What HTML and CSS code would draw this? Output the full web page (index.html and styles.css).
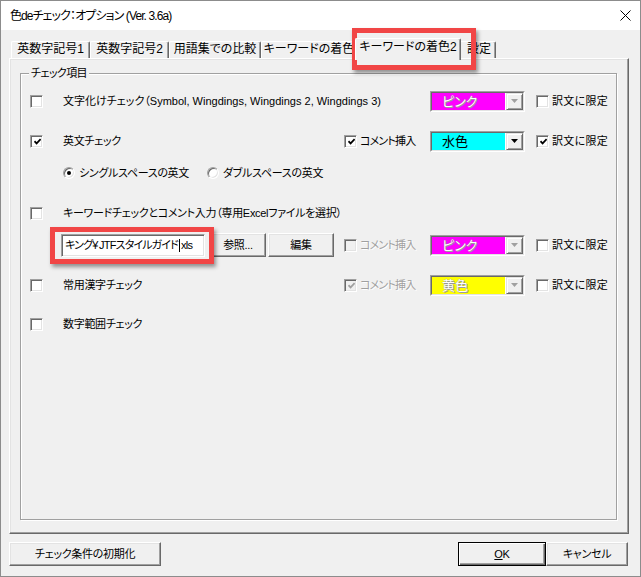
FILE: index.html
```html
<!DOCTYPE html>
<html lang="ja">
<head>
<meta charset="utf-8">
<title>色deチェック：オプション</title>
<link rel="stylesheet" href="styles.css">
</head>
<body>
<div class="window">
  <div class="titlebar">
    <span class="title">色deチェック：オプション (Ver. 3.6a)</span>
    <svg class="close" width="11" height="11" viewBox="0 0 11 11"><path d="M0.5 0.5L10.5 10.5M10.5 0.5L0.5 10.5" stroke="#000" stroke-width="1" fill="none"/></svg>
  </div>
  <div class="client">
    <div class="tabs">
      <div class="tab t1">英数字記号1</div>
      <div class="tab t2">英数字記号2</div>
      <div class="tab t3">用語集での比較</div>
      <div class="tab t4">キーワードの着色</div>
      <div class="tab sel">キーワードの着色2</div>
      <div class="tab t6">設定</div>
    </div>
    <div class="panel">
      <div class="group">
        <span class="legend">チェック項目</span>

        <div class="row r1">
          <div class="cbcol"><span class="cb"></span></div>
          <span class="lbl">文字化けチェック（Symbol, Wingdings, Wingdings 2, Wingdings 3)</span>
          <div class="right">
            <div class="cmt"></div>
            <div class="combo"><div class="combo-in"><span class="field pink dis">ピンク</span><span class="arrow dis"><svg width="7" height="4" viewBox="0 0 7 4"><path d="M0 0H7L3.5 4Z"/></svg></span></div></div>
            <div class="yaku"><span class="cb"></span><span>訳文に限定</span></div>
          </div>
        </div>

        <div class="row r2">
          <div class="cbcol"><span class="cb"><svg class="chk" width="7" height="7" viewBox="0 0 7 7"><path d="M0.5 3.2L2.6 5.4L6.6 1.2"/></svg></span></div>
          <span class="lbl">英文チェック</span>
          <div class="right">
            <div class="cmt"><span class="cb"><svg class="chk" width="7" height="7" viewBox="0 0 7 7"><path d="M0.5 3.2L2.6 5.4L6.6 1.2"/></svg></span><span>コメント挿入</span></div>
            <div class="combo"><div class="combo-in"><span class="field cyan">水色</span><span class="arrow"><svg width="7" height="4" viewBox="0 0 7 4"><path d="M0 0H7L3.5 4Z"/></svg></span></div></div>
            <div class="yaku"><span class="cb"><svg class="chk" width="7" height="7" viewBox="0 0 7 7"><path d="M0.5 3.2L2.6 5.4L6.6 1.2"/></svg></span><span>訳文に限定</span></div>
          </div>
        </div>

        <div class="row r3">
          <div class="cbcol"></div>
          <div class="ropt first"><span class="radio on"></span><span>シングルスペースの英文</span></div>
          <div class="ropt"><span class="radio"></span><span>ダブルスペースの英文</span></div>
        </div>

        <div class="row r4">
          <div class="cbcol"><span class="cb"></span></div>
          <span class="lbl">キーワードチェックとコメント入力（専用Excelファイルを選択）</span>
        </div>

        <div class="row r5">
          <div class="tbcol"></div>
          <div class="tb"><span>キング<span class="yen">¥</span>JTFスタイルガイド</span><span class="caret"></span><span>xls</span></div>
          <button class="btn ref">参照...</button>
          <button class="btn edit">編集</button>
          <div class="fill"></div>
          <div class="right">
            <div class="cmt off"><span class="cb dis"></span><span>コメント挿入</span></div>
            <div class="combo"><div class="combo-in"><span class="field pink dis">ピンク</span><span class="arrow dis"><svg width="7" height="4" viewBox="0 0 7 4"><path d="M0 0H7L3.5 4Z"/></svg></span></div></div>
            <div class="yaku"><span class="cb"></span><span>訳文に限定</span></div>
          </div>
        </div>

        <div class="row r6">
          <div class="cbcol"><span class="cb"></span></div>
          <span class="lbl">常用漢字チェック</span>
          <div class="right">
            <div class="cmt off"><span class="cb dis"><svg class="chk" width="7" height="7" viewBox="0 0 7 7"><path d="M0.5 3.2L2.6 5.4L6.6 1.2"/></svg></span><span>コメント挿入</span></div>
            <div class="combo"><div class="combo-in"><span class="field yellow dis">黄色</span><span class="arrow dis"><svg width="7" height="4" viewBox="0 0 7 4"><path d="M0 0H7L3.5 4Z"/></svg></span></div></div>
            <div class="yaku"><span class="cb"></span><span>訳文に限定</span></div>
          </div>
        </div>

        <div class="row r7">
          <div class="cbcol"><span class="cb"></span></div>
          <span class="lbl">数字範囲チェック</span>
        </div>
      </div>
    </div>
    <div class="footer">
      <button class="btn init">チェック条件の初期化</button>
      <div class="fill"></div>
      <button class="btn ok"><u>O</u>K</button>
      <button class="btn cancel">キャンセル</button>
    </div>
  </div>
  <div class="hl hl-tab"></div>
  <div class="hl hl-file"></div>
</div>
</body>
</html>
```

FILE: styles.css
```css
* { box-sizing: border-box; }
html, body { margin: 0; padding: 0; }
body {
  width: 641px;
  height: 577px;
  background: #f0f0f0;
  font-family: "Liberation Sans", "Noto Sans CJK JP", sans-serif;
  font-size: 11px;
  letter-spacing: -0.3px;
  color: #000;
  font-feature-settings: "palt";
  overflow: hidden;
}
.window {
  position: relative;
  width: 641px;
  height: 577px;
  border: 1px solid #8c8c8c;
  background: #f0f0f0;
  display: flex;
  flex-direction: column;
}
.titlebar {
  height: 29px;
  flex: none;
  background: #fff;
  display: flex;
  align-items: center;
  justify-content: space-between;
  padding: 0 9px 0 9px;
}
.title {
  font-family: "Liberation Sans", "Noto Sans CJK JP", sans-serif;
  font-size: 12px;
  line-height: 16px;
  letter-spacing: -0.9px;
}
.close { display: block; margin-top: -1px; }

.client { flex: 1; padding: 8px 0 0 8px; }

.tabs {
  display: flex;
  align-items: flex-end;
  height: 20px;
  padding-left: 2px;
}
.tab {
  height: 17px;
  border: 1px solid;
  border-color: #fff #696969 transparent #fff;
  border-bottom: none;
  border-radius: 2px 2px 0 0;
  box-shadow: inset -1px 0 0 #a0a0a0;
  text-align: center;
  font-size: 12px;
  letter-spacing: 0;
  line-height: 15px;
  white-space: nowrap;
  background: #f0f0f0;
}
.t1 { width: 79px; }
.t2 { width: 79px; }
.t3 { width: 92px; }
.t4 { width: 96px; }
.t6 { width: 37px; padding-left: 3px; }
.tab.sel {
  width: 106px;
  height: 22px;
  margin: 0 -2px -2px;
  position: relative;
  z-index: 2;
  line-height: 17px;
}

.panel {
  width: 620px;
  height: 476px;
  border: 1px solid;
  border-color: #fff #696969 #696969 #fff;
  box-shadow: inset -1px -1px 0 #a0a0a0, inset 1px 1px 0 #e3e3e3;
  padding: 14px 0 0 10px;
}

.group {
  position: relative;
  width: 597px;
  height: 447px;
  border: 1px solid #a0a0a0;
  box-shadow: inset 1px 1px 0 #fff, 1px 1px 0 #fff;
  padding: 16px 8px 0 9px;
}
.legend {
  position: absolute;
  top: -8px;
  left: 8px;
  padding: 0 2px;
  background: #f0f0f0;
  line-height: 14px;
  letter-spacing: -0.6px;
}

.row {
  display: flex;
  align-items: center;
  height: 22px;
}
.r1 .lbl { letter-spacing: 0; }
.r2 { margin-top: 18px; }
.r3 { margin-top: 10px; }
.r4 { margin-top: 18px; }
.r5 { margin-top: 9px; height: 24px; }
.r6 { margin-top: 17px; }
.r7 { margin-top: 17px; }

.cbcol { width: 33px; flex: none; display: flex; align-items: center; }
.tbcol { width: 31px; flex: none; }
.lbl { flex: 1; min-width: 0; white-space: nowrap; line-height: 14px; }
.fill { flex: 1; }

.cb {
  width: 13px;
  height: 13px;
  flex: none;
  background: #fff;
  border: 1px solid;
  border-color: #a0a0a0 #fff #fff #a0a0a0;
  box-shadow: inset 1px 1px 0 #696969, inset -1px -1px 0 #e3e3e3;
  display: flex;
  align-items: center;
  justify-content: center;
}
.cb.dis { background: #f0f0f0; }
.chk { display: block; margin: 0 0 0 1px; }
.chk path { fill: none; stroke: #000; stroke-width: 1.7; }
.cb.dis .chk path { stroke: #a0a0a0; }

.right {
  display: flex;
  align-items: center;
  width: 264px;
  flex: none;
}
.cmt {
  width: 86px;
  display: flex;
  align-items: center;
  gap: 3px;
  white-space: nowrap;
  line-height: 14px;
  letter-spacing: -0.8px;
}
.cmt.off { color: #a0a0a0; text-shadow: 1px 1px 0 #fff; }
.yaku {
  margin-left: 11px;
  width: 72px;
  display: flex;
  align-items: center;
  gap: 3px;
  white-space: nowrap;
  line-height: 14px;
  letter-spacing: 0.3px;
}

.combo {
  width: 95px;
  height: 21px;
  border: 1px solid;
  border-color: #a0a0a0 #fff #fff #a0a0a0;
  flex: none;
}
.combo-in {
  height: 100%;
  border: 1px solid;
  border-color: #696969 #e3e3e3 #e3e3e3 #696969;
  display: flex;
  background: #fff;
}
.field {
  flex: 1;
  padding-left: 10px;
  font-size: 13px;
  letter-spacing: 0;
  line-height: 17px;
  white-space: nowrap;
}
.pink { background: #ff00ff; }
.cyan { background: #00ffff; }
.yellow { background: #ffff00; }
.field.dis { color: #fff; text-shadow: 0 0 1px #7a7a7a, 1px 1px 0 #a0a0a0; }
.arrow {
  width: 17px;
  margin-left: 1px;
  flex: none;
  background: #f0f0f0;
  border: 1px solid;
  border-color: #e3e3e3 #696969 #696969 #e3e3e3;
  box-shadow: inset 1px 1px 0 #fff, inset -1px -1px 0 #a0a0a0;
  display: flex;
  align-items: center;
  justify-content: center;
}
.arrow svg { display: block; fill: #000; }
.arrow.dis svg { fill: #a0a0a0; }

.ropt {
  display: flex;
  align-items: center;
  gap: 4px;
  line-height: 14px;
  white-space: nowrap;
}
.ropt.first { width: 144px; }
.radio {
  width: 12px;
  height: 12px;
  flex: none;
  border-radius: 50%;
  border: 1px solid;
  border-color: #a0a0a0 #fff #fff #a0a0a0;
  background: #fff;
  box-shadow: inset 1px 1px 0 #696969, inset -1px -1px 0 #e3e3e3;
  display: flex;
  align-items: center;
  justify-content: center;
}
.radio.on::after {
  content: "";
  width: 4px;
  height: 4px;
  border-radius: 50%;
  background: #000;
}

.tb {
  width: 144px;
  height: 23px;
  flex: none;
  background: #fff;
  border: 1px solid;
  border-color: #a0a0a0 #fff #fff #a0a0a0;
  box-shadow: inset 1px 1px 0 #696969, inset -1px -1px 0 #e3e3e3;
  display: flex;
  align-items: center;
  padding-left: 3px;
  white-space: nowrap;
  overflow: hidden;
  line-height: 14px;
  letter-spacing: -0.8px;
}
.yen { letter-spacing: 0.6px; }
.caret {
  width: 1px;
  height: 13px;
  background: #000;
  margin: 0 1px;
  flex: none;
}

.btn {
  height: 24px;
  flex: none;
  border: 1px solid;
  border-color: #fff #696969 #696969 #fff;
  box-shadow: inset -1px -1px 0 #a0a0a0, inset 1px 1px 0 #e3e3e3;
  background: #f0f0f0;
  font: inherit;
  letter-spacing: inherit;
  color: #000;
  padding: 0;
  line-height: 14px;
  white-space: nowrap;
}
.ref { width: 56px; margin-left: 5px; }
.edit { width: 66px; margin-left: 2px; }

.footer {
  display: flex;
  margin-top: 8px;
  width: 619px;
}
.init { width: 152px; }
.ok {
  width: 88px;
  border-color: #000;
  box-shadow: inset 1px 1px 0 #fff, inset -1px -1px 0 #696969, inset -2px -2px 0 #a0a0a0;
}
.cancel { width: 82px; }

.hl {
  position: absolute;
  border: 5px solid #f14646;
  box-shadow: 2px 3px 4px rgba(0, 0, 0, 0.4);
}
.hl-tab { left: 351px; top: 27px; width: 124px; height: 42px; }
.hl-file { left: 49px; top: 226px; width: 164px; height: 37px; }
```
